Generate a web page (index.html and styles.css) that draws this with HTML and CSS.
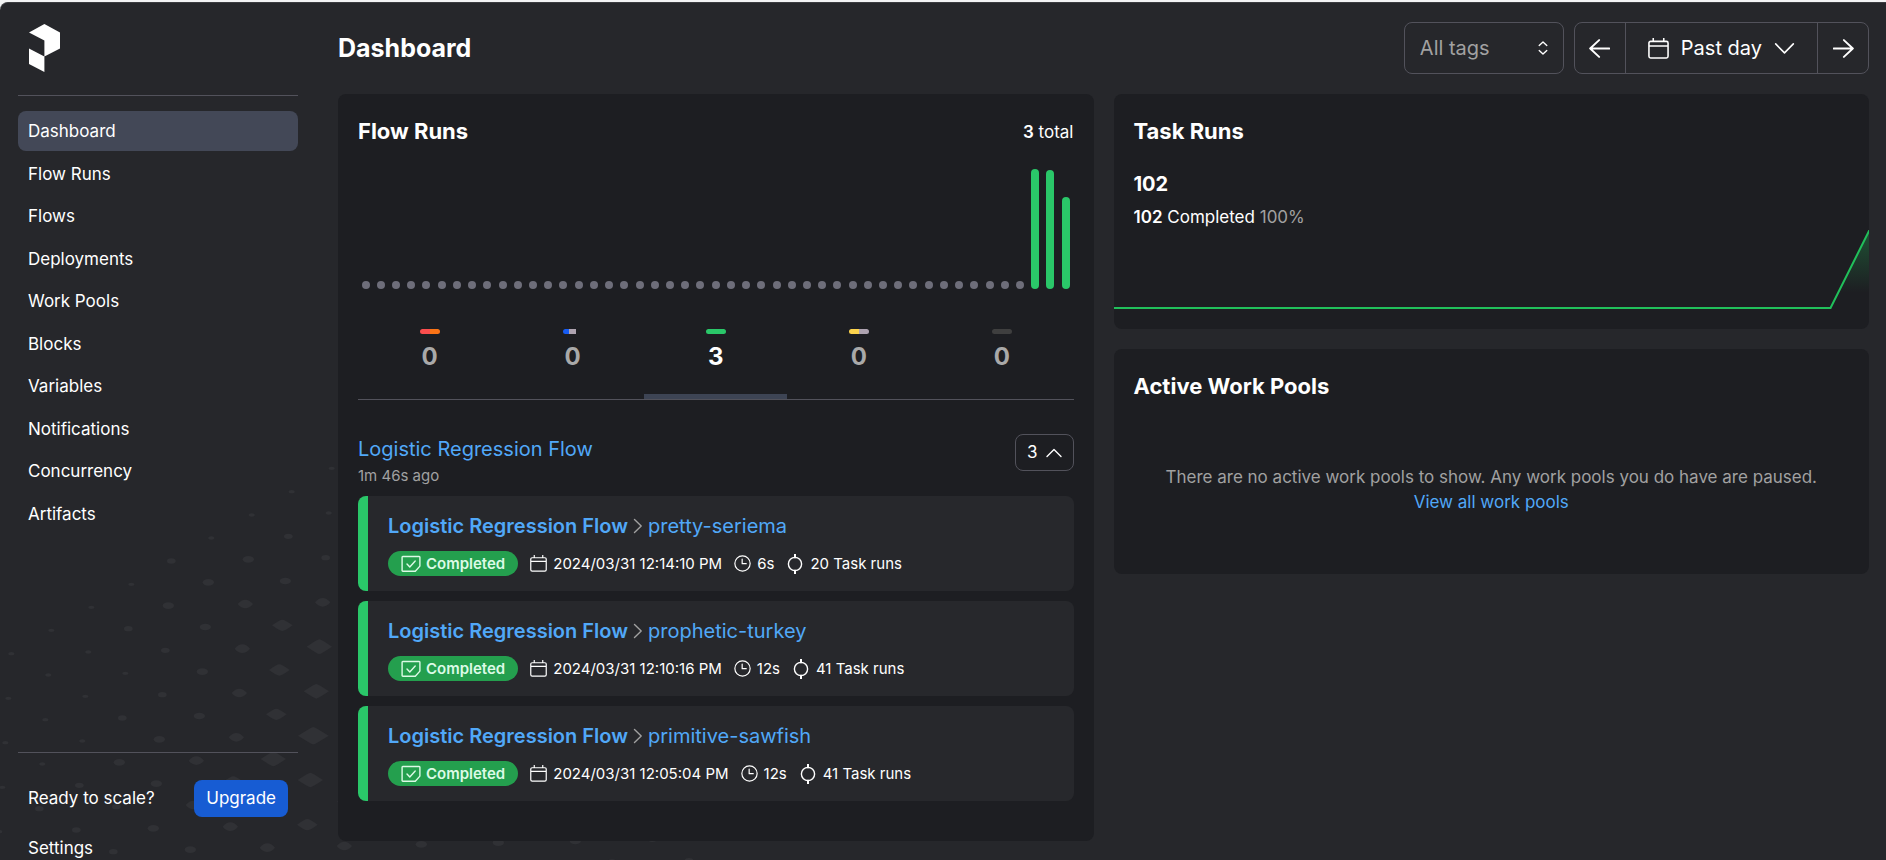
FILE: index.html
```html
<!DOCTYPE html>
<html lang="en">
<head>
<meta charset="utf-8">
<title>Dashboard</title>
<link rel="stylesheet" href="styles.css">
</head>
<body>
<svg class="defs" aria-hidden="true">
  <defs>
    <symbol id="calendar" viewBox="0 0 20 20"><path d="M2.5 3.2h15a1.6 1.6 0 0 1 1.6 1.6v12.6a1.6 1.6 0 0 1-1.6 1.6h-15a1.6 1.6 0 0 1-1.6-1.6V4.8a1.6 1.6 0 0 1 1.6-1.6zM1 7.6h18M5 .4v2.8M15 .4v2.8"/></symbol>
    <symbol id="clock" viewBox="0 0 20 20"><circle cx="10" cy="10" r="9"/><path d="M9.6 4.8v5.4h4.8"/></symbol>
    <symbol id="task" viewBox="0 0 18 20"><circle cx="9" cy="10" r="6.6"/><path d="M9 0v3.4M9 16.6V20" class="heavy"/></symbol>
    <symbol id="check" viewBox="0 0 20 18"><path d="M1.8 1.5h16.4a.7.7 0 0 1 .7.7v8.9l-4.6 5.1H1.8a.7.7 0 0 1-.7-.7V2.2a.7.7 0 0 1 .7-.7zM6 9l2.8 3 5.4-6"/></symbol>
    <symbol id="chevron-right" viewBox="0 0 10 16"><path d="M1.5 1.5 8.2 8l-6.7 6.5"/></symbol>
    <symbol id="chevron-down" viewBox="0 0 20 20"><path d="m1.6 5.6 8.4 8.6 8.4-8.6"/></symbol>
    <symbol id="chevron-up" viewBox="0 0 16 16"><path d="m1 11.4 7-7 7 7"/></symbol>
    <symbol id="arrow-left" viewBox="0 0 22 22"><path d="M1.2 11h20M10.6 2.2 1.2 11l9.4 8.8"/></symbol>
    <symbol id="arrow-right" viewBox="0 0 22 22"><path d="M20.8 11h-20M11.4 2.2l9.4 8.8-9.4 8.8"/></symbol>
    <symbol id="sort" viewBox="0 0 10 14"><path d="M1.2 4.4 5 .9l3.8 3.5M1.2 9.6 5 13.1l3.8-3.5"/></symbol>
    <ellipse id="d1" rx="9" ry="5"/>
    <ellipse id="d2" rx="13" ry="8"/>
    <ellipse id="d3" rx="17" ry="10"/>
    <path id="d4" d="M-23 0Q-12-13 0-13T23 0Q12 13 0 13T-23 0z"/>
    <path id="d5" d="M-31 0Q-8-17 0-17T31 0Q8 17 0 17T-31 0z"/>
    <path id="d6" d="M-38 0Q-5-22 0-22T38 0Q5 22 0 22T-38 0z"/>
    <path id="d7" d="M-46 0Q-5-26 0-26T46 0Q5 26 0 26T-46 0z"/>
  </defs>
</svg>
<div class="app">
  <svg class="pattern" viewBox="0 0 2400 1260" aria-hidden="true">
    <use href="#d1" x="995" y="85"/><use href="#d1" x="875" y="155"/><use href="#d1" x="755" y="225"/><use href="#d1" x="634" y="294"/><use href="#d2" x="514" y="363"/><use href="#d1" x="394" y="433"/><use href="#d1" x="274" y="502"/><use href="#d1" x="154" y="571"/><use href="#d1" x="34" y="641"/>
    <use href="#d1" x="986" y="219"/><use href="#d2" x="865" y="289"/><use href="#d3" x="745" y="358"/><use href="#d3" x="625" y="427"/><use href="#d3" x="505" y="497"/><use href="#d2" x="385" y="566"/><use href="#d1" x="265" y="636"/><use href="#d1" x="145" y="705"/><use href="#d1" x="25" y="775"/>
    <use href="#d2" x="977" y="353"/><use href="#d3" x="856" y="423"/><use href="#d4" x="736" y="492"/><use href="#d3" x="616" y="561"/><use href="#d2" x="496" y="631"/><use href="#d1" x="376" y="700"/><use href="#d1" x="256" y="769"/><use href="#d1" x="136" y="839"/><use href="#d1" x="16" y="908"/>
    <use href="#d4" x="968" y="487"/><use href="#d5" x="847" y="556"/><use href="#d4" x="727" y="626"/><use href="#d3" x="607" y="695"/><use href="#d2" x="487" y="764"/><use href="#d2" x="367" y="834"/><use href="#d1" x="247" y="903"/><use href="#d1" x="127" y="972"/><use href="#d1" x="7" y="1042"/>
    <use href="#d6" x="958" y="620"/><use href="#d5" x="838" y="690"/><use href="#d4" x="718" y="759"/><use href="#d3" x="598" y="828"/><use href="#d3" x="478" y="898"/><use href="#d3" x="358" y="967"/><use href="#d2" x="238" y="1036"/><use href="#d2" x="118" y="1106"/><use href="#d1" x="-2" y="1175"/>
    <use href="#d6" x="949" y="754"/><use href="#d5" x="829" y="823"/><use href="#d4" x="709" y="892"/><use href="#d4" x="589" y="962"/><use href="#d3" x="469" y="1031"/><use href="#d2" x="349" y="1100"/><use href="#d2" x="229" y="1170"/>
    <use href="#d7" x="940" y="887"/><use href="#d6" x="820" y="957"/><use href="#d5" x="700" y="1026"/><use href="#d4" x="580" y="1095"/><use href="#d3" x="460" y="1165"/><use href="#d2" x="340" y="1235"/>
    <use href="#d6" x="1051" y="952"/><use href="#d6" x="931" y="1020"/><use href="#d5" x="811" y="1090"/><use href="#d4" x="691" y="1160"/><use href="#d3" x="571" y="1229"/>
    <use href="#d5" x="1042" y="1085"/><use href="#d5" x="922" y="1154"/><use href="#d4" x="802" y="1223"/>
    <use href="#d4" x="1033" y="1218"/><use href="#d3" x="1264" y="1213"/><use href="#d3" x="1495" y="1208"/><use href="#d3" x="1726" y="1203"/><use href="#d2" x="1957" y="1198"/><use href="#d2" x="1836" y="1266"/><use href="#d2" x="2067" y="1262"/>
  </svg>

  <aside class="sidebar">
    <a class="logo" href="#" aria-label="Home">
      <svg viewBox="0 0 31 48"><path d="M0 8.4 15.4 0 31 8.4v16.1l-15.6 7.9V16.4zM0 24.5l15.4 7.9V48L0 40z"/></svg>
    </a>
    <nav class="nav">
      <a class="nav-item is-active" href="#">Dashboard</a>
      <a class="nav-item" href="#">Flow Runs</a>
      <a class="nav-item" href="#">Flows</a>
      <a class="nav-item" href="#">Deployments</a>
      <a class="nav-item" href="#">Work Pools</a>
      <a class="nav-item" href="#">Blocks</a>
      <a class="nav-item" href="#">Variables</a>
      <a class="nav-item" href="#">Notifications</a>
      <a class="nav-item" href="#">Concurrency</a>
      <a class="nav-item" href="#">Artifacts</a>
    </nav>
    <div class="side-foot">
      <div class="upgrade"><span>Ready to scale?</span><button class="upgrade-btn" type="button">Upgrade</button></div>
      <a class="settings" href="#">Settings</a>
    </div>
  </aside>

  <main class="main">
    <header class="header">
      <h1 class="page-title">Dashboard</h1>
      <div class="tags">
        <select class="tags-select" aria-label="Tags"><option>All tags</option></select>
        <svg class="tags-icon line"><use href="#sort"/></svg>
      </div>
      <div class="range">
        <button class="range-btn" type="button" aria-label="Previous"><svg class="i-arrow line"><use href="#arrow-left"/></svg></button>
        <button class="range-btn range-mid" type="button"><svg class="i-arrow line"><use href="#calendar"/></svg><span>Past day</span><svg class="i-arrow line"><use href="#chevron-down"/></svg></button>
        <button class="range-btn" type="button" aria-label="Next"><svg class="i-arrow line"><use href="#arrow-right"/></svg></button>
      </div>
    </header>

    <div class="columns">
      <section class="card flow-card">
        <div class="card-head"><h2 class="title">Flow Runs</h2><span class="total"><b>3</b> total</span></div>
        <div class="bars">
          <i></i><i></i><i></i><i></i><i></i><i></i><i></i><i></i><i></i><i></i><i></i>
          <i></i><i></i><i></i><i></i><i></i><i></i><i></i><i></i><i></i><i></i><i></i>
          <i></i><i></i><i></i><i></i><i></i><i></i><i></i><i></i><i></i><i></i><i></i>
          <i></i><i></i><i></i><i></i><i></i><i></i><i></i><i></i><i></i><i></i><i></i>
          <i class="run" style="height:100%"></i><i class="run" style="height:99%"></i><i class="run" style="height:77%"></i>
        </div>
        <div class="tabs" role="tablist">
          <button class="tab" type="button" role="tab"><span class="pill"><i class="failed"></i><i class="crashed"></i></span>0</button>
          <button class="tab" type="button" role="tab"><span class="pill"><i class="running"></i><i class="pending"></i><i></i></span>0</button>
          <button class="tab is-selected" type="button" role="tab" aria-selected="true"><span class="pill"><i class="completed"></i></span>3</button>
          <button class="tab" type="button" role="tab"><span class="pill"><i class="scheduled"></i><i class="pending"></i></span>0</button>
          <button class="tab" type="button" role="tab"><span class="pill"><i class="cancelled"></i></span>0</button>
        </div>
        <div class="group-head">
          <div><a class="flow-link" href="#">Logistic Regression Flow</a><div class="ago">1m 46s ago</div></div>
          <button class="toggle" type="button">3<svg class="line"><use href="#chevron-up"/></svg></button>
        </div>
        <div class="runs">
          <article class="run-card">
            <div class="run-name"><a class="flow-link" href="#"><b>Logistic Regression Flow</b></a><svg class="crumb line"><use href="#chevron-right"/></svg><a class="flow-link" href="#">pretty-seriema</a></div>
            <div class="meta"><span class="badge"><svg class="i-check line"><use href="#check"/></svg>Completed</span><span class="fact"><svg class="i-meta line"><use href="#calendar"/></svg>2024/03/31 12:14:10 PM</span><span class="fact"><svg class="i-meta line"><use href="#clock"/></svg>6s</span><span class="fact"><svg class="i-task line"><use href="#task"/></svg>20 Task runs</span></div>
          </article>
          <article class="run-card">
            <div class="run-name"><a class="flow-link" href="#"><b>Logistic Regression Flow</b></a><svg class="crumb line"><use href="#chevron-right"/></svg><a class="flow-link" href="#">prophetic-turkey</a></div>
            <div class="meta"><span class="badge"><svg class="i-check line"><use href="#check"/></svg>Completed</span><span class="fact"><svg class="i-meta line"><use href="#calendar"/></svg>2024/03/31 12:10:16 PM</span><span class="fact"><svg class="i-meta line"><use href="#clock"/></svg>12s</span><span class="fact"><svg class="i-task line"><use href="#task"/></svg>41 Task runs</span></div>
          </article>
          <article class="run-card">
            <div class="run-name"><a class="flow-link" href="#"><b>Logistic Regression Flow</b></a><svg class="crumb line"><use href="#chevron-right"/></svg><a class="flow-link" href="#">primitive-sawfish</a></div>
            <div class="meta"><span class="badge"><svg class="i-check line"><use href="#check"/></svg>Completed</span><span class="fact"><svg class="i-meta line"><use href="#calendar"/></svg>2024/03/31 12:05:04 PM</span><span class="fact"><svg class="i-meta line"><use href="#clock"/></svg>12s</span><span class="fact"><svg class="i-task line"><use href="#task"/></svg>41 Task runs</span></div>
          </article>
        </div>
      </section>

      <div class="side-col">
        <section class="card task-card">
          <h2 class="title">Task Runs</h2>
          <div class="task-total">102</div>
          <div class="task-state"><b>102</b> Completed <span class="muted">100%</span></div>
          <svg class="task-chart" viewBox="0 0 756 79" preserveAspectRatio="none" aria-hidden="true">
            <defs><linearGradient id="fade" x1="0" y1="0" x2="0" y2="1"><stop offset="0" stop-color="#21c05b" stop-opacity=".32"/><stop offset=".8" stop-color="#21c05b" stop-opacity="0"/></linearGradient></defs>
            <path d="M717 78 756 0V78z" fill="url(#fade)"/>
            <path class="task-line" d="M0 78H717L756 0"/>
          </svg>
        </section>
        <section class="card pool-card">
          <h2 class="title">Active Work Pools</h2>
          <p class="empty">There are no active work pools to show. Any work pools you do have are paused.<br><a class="link" href="#">View all work pools</a></p>
        </section>
      </div>
    </div>
  </main>
</div>
</body>
</html>
```
FILE: styles.css
```css
* { box-sizing: border-box; }

body {
  margin: 0;
  padding-top: 2px;
  height: 100vh;
  overflow: hidden;
  background: #f3f4f5;
  color: #fff;
  font-family: Inter, "Liberation Sans", sans-serif;
  font-size: 17px;
  line-height: 25px;
}

a { color: inherit; text-decoration: none; }
b { font-weight: 600; }
button, select { font: inherit; color: inherit; margin: 0; background: none; border: 0; cursor: pointer; }
h1, h2, p { margin: 0; }
.defs { position: absolute; width: 0; height: 0; }
.line { fill: none; stroke: currentColor; stroke-width: 1.4; stroke-linecap: round; stroke-linejoin: round; flex: none; }
.heavy { stroke-width: 2; }

.app {
  position: relative;
  display: flex;
  height: 100%;
  border-top: 1px solid #3c3d41;
  border-top-left-radius: 8px;
  background: #26272b;
}
.pattern { position: absolute; left: 0; bottom: 0; width: 800px; height: 420px; fill: #303135; }

.sidebar { position: relative; flex: none; display: flex; flex-direction: column; width: 318px; padding: 21px 20px 0 18px; }
.logo { display: block; padding: 0 11px 23px; border-bottom: 1px solid #52525b; }
.logo svg { display: block; width: 31px; height: 48px; fill: #fff; }
.nav { display: flex; flex-direction: column; justify-content: space-between; min-height: 423px; margin-top: 15px; }
.nav-item { padding: 8px 10px 7px; border-radius: 8px; }
.is-active { background: #434857; }
.side-foot { margin-top: auto; border-top: 1px solid #52525b; padding-top: 27px; }
.upgrade { display: flex; align-items: center; justify-content: space-between; padding: 0 10px; }
.upgrade-btn { height: 37px; padding: 0 12px; border-radius: 8px; background: #175cd3; }
.settings { display: block; padding: 19px 10px 0; line-height: 24px; }

.main { position: relative; flex: 1; min-width: 0; padding: 19px 17px 0 20px; }
.header { display: flex; align-items: center; gap: 10px; margin-bottom: 20px; font-size: 20px; }
.title { font-size: 22px; line-height: 35px; font-weight: 700; }
.page-title { margin-right: auto; font-size: 25px; line-height: 35px; font-weight: 700; }
.tags { position: relative; width: 160px; }
.tags-select { width: 100%; height: 52px; padding: 0 15px; border: 1px solid #52525b; border-radius: 8px; color: #a1a1a1; appearance: none; }
.tags-icon { position: absolute; right: 16px; top: 19px; width: 10px; height: 14px; pointer-events: none; }
.range { display: flex; height: 52px; border: 1px solid #52525b; border-radius: 8px; }
.range-btn { display: flex; align-items: center; justify-content: center; gap: 12px; min-width: 50px; padding: 0 14px; }
.range-mid { padding: 0 22px; border: solid #52525b; border-width: 0 1px; }
.i-arrow { width: 21px; height: 21px; stroke-width: 2; }
.range-mid .i-arrow { stroke-width: 1.5; }

.columns { display: grid; grid-template-columns: 1fr 1fr; gap: 20px; align-items: start; }
.side-col { display: grid; gap: 20px; }
.card { background: #1d1e22; border-radius: 8px; padding: 20px; }
.flow-card { padding-bottom: 40px; }
.card-head { display: flex; align-items: center; justify-content: space-between; }
.total { padding-top: 2px; }

.bars { display: flex; align-items: flex-end; justify-content: space-around; height: 120px; margin: 20px 0 40px; }
.bars i { width: 8px; height: 8px; border-radius: 4px; background: #6e6e7a; }
.bars .run { background: #2ac769; }

.tabs { display: grid; grid-template-columns: repeat(5, 1fr); border-bottom: 1px solid #52525b; }
.tab { display: flex; flex-direction: column; align-items: center; gap: 5px; height: 70px; padding: 0; font-size: 24px; line-height: 35px; font-weight: 700; color: #a9a9a9; }
.tab.is-selected { color: #fff; box-shadow: inset 0 -5px #3d4454; }
.pill { display: flex; width: 20px; height: 5px; border-radius: 3px; overflow: hidden; }
.pill i { flex: 1; }
.failed { background: #fb4e4e; }
.crashed { background: #f97316; }
.running { background: #175cf3; }
.pending { background: #aea3b0; }
.completed { background: #2ac769; }
.scheduled { background: #fcd34d; }
.cancelled { background: #3f3f3f; }

.group-head { display: flex; justify-content: space-between; align-items: flex-start; margin: 34px 0 8px; }
.flow-link { color: #51a8f8; font-size: 20px; line-height: 30px; }
.link { color: #51a8f8; }
.ago { font-size: 15px; line-height: 24px; color: #a1a1a1; }
.toggle { display: flex; align-items: center; gap: 8px; height: 37px; padding: 0 11px; border: 1px solid #52525b; border-radius: 8px; }
.toggle svg { width: 16px; height: 16px; }

.runs { display: grid; gap: 10px; }
.run-card { display: grid; gap: 10px; padding: 15px 20px; background: #27282c; border-left: 10px solid #2ac769; border-radius: 8px; }
.run-name { display: flex; align-items: center; gap: 5px; }
.crumb { width: 10px; height: 16px; color: #a1a1a1; }
.meta { display: flex; align-items: center; gap: 12px; font-size: 15px; }
.badge { display: flex; align-items: center; gap: 5px; padding: 0 13px; border-radius: 13px; background: #249f4e; color: #dcfae6; font-weight: 600; }
.i-check { width: 20px; height: 18px; }
.fact { display: flex; align-items: center; gap: 6px; }
.i-meta { width: 17px; height: 17px; }
.i-task { width: 18px; height: 20px; }

.task-card { padding: 20px 0; }
.task-card .title, .task-total, .task-state { padding: 0 20px; }
.task-total { margin-top: 20px; font-size: 20px; line-height: 30px; font-weight: 700; }
.task-state { margin-top: 6px; }
.muted { color: #a1a1a1; }
.task-chart { display: block; width: 100%; height: 79px; }
.task-line { fill: none; stroke: #21c05b; stroke-width: 2; vector-effect: non-scaling-stroke; }
.empty { padding: 61px 0 39px; text-align: center; color: #a1a1a1; }
```
